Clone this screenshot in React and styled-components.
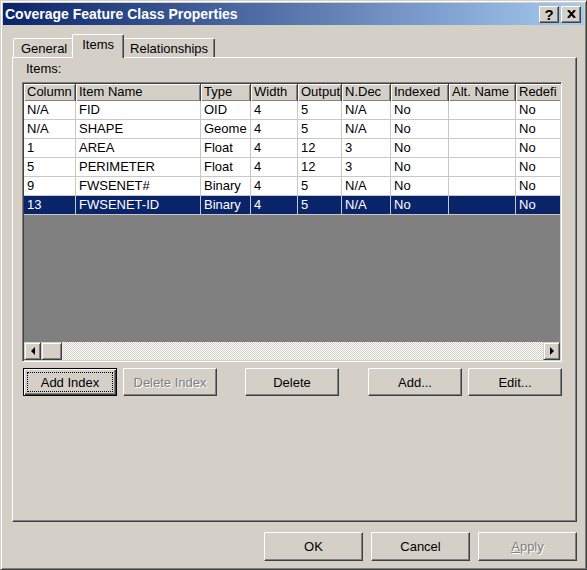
import styled, { createGlobalStyle } from "styled-components";

const GlobalStyle = createGlobalStyle`
  * { margin: 0; padding: 0; box-sizing: border-box; }
  body {
    background: #d4d0c8;
    font-family: "Liberation Sans", Arial, sans-serif;
    font-size: 13px;
    color: #000;
  }
`;

const Window = styled.div`
  width: 587px;
  height: 570px;
  background: #d4d0c8;
  border: 1px solid;
  border-color: #d4d0c8 #404040 #404040 #d4d0c8;
  box-shadow: inset 1px 1px #fff, inset -1px -1px #808080;
  padding: 2px;
  display: flex;
  flex-direction: column;
`;

const TitleBar = styled.div`
  height: 22px;
  display: flex;
  align-items: center;
  justify-content: space-between;
  padding: 0 3px 0 2px;
  background: linear-gradient(to right, #0a246a, #a6caf0);
  color: #fff;
  font-weight: bold;
  font-size: 14px;
`;

const TitleButtons = styled.div`
  display: flex;
  gap: 2px;
`;

const TitleButton = styled.div`
  width: 20px;
  height: 17px;
  display: flex;
  align-items: center;
  justify-content: center;
  background: #d4d0c8;
  border: 1px solid;
  border-color: #fff #404040 #404040 #fff;
  box-shadow: inset -1px -1px #808080;
  color: #000;
  font-size: 15px;
  font-weight: bold;
`;

const Content = styled.div`
  flex: 1;
  display: flex;
  flex-direction: column;
  padding: 9px 7px 6px 9px;
`;

const TabRow = styled.div`
  height: 23px;
  display: flex;
  align-items: flex-end;
  padding-left: 1px;
`;

const Tab = styled.div`
  position: relative;
  height: ${(p) => (p.$active ? "24px" : "19px")};
  margin: ${(p) => (p.$active ? "0 -2px -1px -2px" : "0")};
  padding: ${(p) => (p.$active ? "2px 9px 0 9px" : "2px 6px 0 7px")};
  z-index: ${(p) => (p.$active ? 1 : 0)};
  background: #d4d0c8;
  border-top: 1px solid #fff;
  border-left: 1px solid #fff;
  border-right: 1px solid #404040;
  box-shadow: inset -1px 0 #808080;
  border-radius: 2px 2px 0 0;
  white-space: nowrap;
`;

const Panel = styled.div`
  flex: 1;
  display: flex;
  flex-direction: column;
  padding: 0 0 0 9px;
  border: 1px solid;
  border-color: #fff #404040 #404040 #fff;
  box-shadow: inset -1px -1px #808080;
`;

const Label = styled.div`
  height: 24px;
  padding: 3px 0 0 4px;
`;

const ListView = styled.div`
  width: 540px;
  height: 280px;
  display: flex;
  flex-direction: column;
  overflow: hidden;
  padding: 1px;
  border: 1px solid;
  border-color: #808080 #fff #fff #808080;
  box-shadow: inset 1px 1px #404040, inset -1px -1px #d4d0c8;
`;

const columns = "52px 125px 50px 47px 44px 49px 58px 67px 80px";

const Row = styled.div`
  flex: none;
  display: grid;
  grid-template-columns: ${columns};
  height: ${(p) => (p.$header ? "17px" : "19px")};
  background: ${(p) => (p.$header ? "#d4d0c8" : p.$selected ? "#0a246a" : "#fff")};
  color: ${(p) => (p.$selected ? "#fff" : "#000")};
  border-bottom: ${(p) => (p.$header ? "none" : "1px solid #c8c8c8")};
  overflow: hidden;
`;

const HeadCell = styled.div`
  padding-left: 3px;
  line-height: 16px;
  white-space: nowrap;
  overflow: hidden;
  border-right: 1px solid #404040;
  box-shadow: inset 1px 1px #fff, inset -1px -1px #808080;
`;

const Cell = styled.div`
  padding-left: 3px;
  line-height: 18px;
  white-space: nowrap;
  overflow: hidden;
  border-right: 1px solid #c8c8c8;
`;

const Empty = styled.div`
  flex: 1;
  background: #808080;
`;

const ScrollBar = styled.div`
  flex: none;
  height: 18px;
  display: grid;
  grid-template-columns: 17px 21px 1fr 17px;
  background-color: #d4d0c8;
  background-image: repeating-conic-gradient(#fff 0 25%, #d4d0c8 0 50%);
  background-size: 2px 2px;
`;

const ScrollPart = styled.div`
  display: flex;
  align-items: center;
  justify-content: center;
  background: #d4d0c8;
  border: 1px solid;
  border-color: #d4d0c8 #404040 #404040 #d4d0c8;
  box-shadow: inset 1px 1px #fff, inset -1px -1px #808080;
`;

const Track = styled.div``;

const ButtonRow = styled.div`
  display: flex;
  margin-top: 6px;
  padding-left: 1px;
`;

const Button = styled.div`
  position: relative;
  flex: none;
  width: ${(p) => p.$w || 94}px;
  height: ${(p) => p.$h || 28}px;
  margin-left: ${(p) => p.$gap || 0}px;
  display: flex;
  align-items: center;
  justify-content: center;
  background: #d4d0c8;
  border: 1px solid;
  border-color: ${(p) => (p.$default ? "#000" : "#fff #404040 #404040 #fff")};
  box-shadow: ${(p) =>
    p.$default
      ? "inset 1px 1px #fff, inset -1px -1px #404040, inset -2px -2px #808080"
      : "inset -1px -1px #808080"};
  color: ${(p) => (p.$disabled ? "#808080" : "#000")};
  text-shadow: ${(p) => (p.$disabled ? "1px 1px 0 #fff" : "none")};

  &::after {
    content: "";
    display: ${(p) => (p.$default ? "block" : "none")};
    position: absolute;
    inset: 3px;
    border: 1px dotted #000;
  }
`;

const Footer = styled.div`
  display: flex;
  justify-content: flex-end;
  gap: 8px;
  margin-top: 10px;
`;

const Arrow = ({ dir }) => (
  <svg width="8" height="8" viewBox="0 0 8 8">
    {dir === "left" ? (
      <polygon points="6,0 6,8 2,4" fill="#000" />
    ) : (
      <polygon points="2,0 2,8 6,4" fill="#000" />
    )}
  </svg>
);

const headers = ["Column", "Item Name", "Type", "Width", "Output", "N.Dec", "Indexed", "Alt. Name", "Redefi"];

const rows = [
  ["N/A", "FID", "OID", "4", "5", "N/A", "No", "", "No"],
  ["N/A", "SHAPE", "Geome", "4", "5", "N/A", "No", "", "No"],
  ["1", "AREA", "Float", "4", "12", "3", "No", "", "No"],
  ["5", "PERIMETER", "Float", "4", "12", "3", "No", "", "No"],
  ["9", "FWSENET#", "Binary", "4", "5", "N/A", "No", "", "No"],
  ["13", "FWSENET-ID", "Binary", "4", "5", "N/A", "No", "", "No"],
];

export default function App() {
  return (
    <Window>
      <GlobalStyle />
      <TitleBar>
        <span>Coverage Feature Class Properties</span>
        <TitleButtons>
          <TitleButton>?</TitleButton>
          <TitleButton>
            <svg width="9" height="8" viewBox="0 0 9 8">
              <path d="M1 0 L8 8 M8 0 L1 8" stroke="#000" strokeWidth="2" />
            </svg>
          </TitleButton>
        </TitleButtons>
      </TitleBar>
      <Content>
        <TabRow>
          <Tab>General</Tab>
          <Tab $active>Items</Tab>
          <Tab>Relationships</Tab>
        </TabRow>
        <Panel>
          <Label>Items:</Label>
          <ListView>
            <Row $header>
              {headers.map((h) => (
                <HeadCell key={h}>{h}</HeadCell>
              ))}
            </Row>
            {rows.map((r, i) => (
              <Row key={i} $selected={i === rows.length - 1}>
                {r.map((c, j) => (
                  <Cell key={j}>{c}</Cell>
                ))}
              </Row>
            ))}
            <Empty />
            <ScrollBar>
              <ScrollPart>
                <Arrow dir="left" />
              </ScrollPart>
              <ScrollPart />
              <Track />
              <ScrollPart>
                <Arrow dir="right" />
              </ScrollPart>
            </ScrollBar>
          </ListView>
          <ButtonRow>
            <Button $default>Add Index</Button>
            <Button $gap={6} $disabled>Delete Index</Button>
            <Button $gap={28}>Delete</Button>
            <Button $gap={29}>Add...</Button>
            <Button $gap={6}>Edit...</Button>
          </ButtonRow>
        </Panel>
        <Footer>
          <Button $w={99} $h={29}>OK</Button>
          <Button $w={99} $h={29}>Cancel</Button>
          <Button $w={99} $h={29} $disabled>
            <span>
              <u>A</u>pply
            </span>
          </Button>
        </Footer>
      </Content>
    </Window>
  );
}
